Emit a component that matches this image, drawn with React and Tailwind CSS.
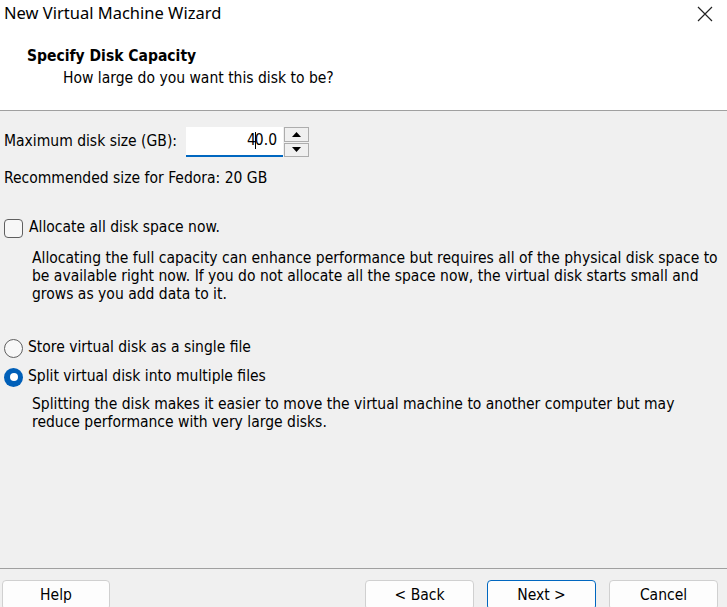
import React from "react";

const body = { fontFamily: '"DejaVu Sans Condensed", "DejaVu Sans", sans-serif', fontStretch: "condensed" };

export default function App() {
  return (
    <div className="w-[727px] h-[607px] overflow-hidden bg-[#f0f0f0] text-[15.5px] text-black flex flex-col" style={body}>
      <div className="h-[111px] bg-white flex flex-col border-b border-[#a0a0a0] shrink-0">
        <div className="h-[27px] flex items-center justify-between pl-[4px] pr-[14px]">
          <span className="text-[16.5px] leading-none" style={{ fontFamily: '"Noto Sans", "Open Sans", sans-serif' }}>New Virtual Machine Wizard</span>
          <svg width="16" height="16" viewBox="0 0 16 16" className="mt-[1px]">
            <path d="M1 1 L15 15 M15 1 L1 15" stroke="#222" strokeWidth="1.2" fill="none" />
          </svg>
        </div>
        <div className="pl-[27px] pt-[19px] font-bold leading-[20px]">Specify Disk Capacity</div>
        <div className="pl-[63px] pt-[2px] leading-[20px]">How large do you want this disk to be?</div>
      </div>

      <div className="flex-1 flex flex-col px-[4px]">
        <div className="flex items-center mt-[16px] h-[30px]">
          <span className="w-[182px] whitespace-nowrap">Maximum disk size (GB):</span>
          <div className="w-[97px] h-[30px] bg-white border-b-2 border-[#0067c0] flex items-center justify-end pr-[6px]">
            <span>4<span className="inline-block w-px h-[17px] bg-black align-middle -mx-px"></span>0.0</span>
          </div>
          <div className="ml-[1px] w-[25px] h-[30px] flex flex-col gap-[1px]">
            <div className="flex-1 bg-[#f0f0f0] border border-[#adadad] flex items-center justify-center">
              <svg width="9" height="5" viewBox="0 0 9 5"><path d="M0 5 L4.5 0 L9 5 Z" fill="#000" /></svg>
            </div>
            <div className="flex-1 bg-[#f0f0f0] border border-[#adadad] flex items-center justify-center">
              <svg width="9" height="5" viewBox="0 0 9 5"><path d="M0 0 L4.5 5 L9 0 Z" fill="#000" /></svg>
            </div>
          </div>
        </div>
        <div className="mt-[11px] leading-[20px]">Recommended size for Fedora: 20 GB</div>

        <label className="flex items-center mt-[30px] h-[20px]">
          <span className="w-[19px] h-[19px] rounded-[4px] border border-[#5f5f5f] bg-[#f7f7f7] shrink-0"></span>
          <span className="ml-[6px]">Allocate all disk space now.</span>
        </label>
        <div className="ml-[28px] mt-[11px] leading-[18px] whitespace-nowrap">
          <div>Allocating the full capacity can enhance performance but requires all of the physical disk space to</div>
          <div>be available right now. If you do not allocate all the space now, the virtual disk starts small and</div>
          <div>grows as you add data to it.</div>
        </div>

        <label className="flex items-center mt-[35px] h-[20px]">
          <span className="w-[19px] h-[19px] rounded-full border border-[#5f5f5f] bg-[#f7f7f7] shrink-0"></span>
          <span className="ml-[5px]">Store virtual disk as a single file</span>
        </label>
        <label className="flex items-center mt-[9px] h-[20px]">
          <span className="w-[19px] h-[19px] rounded-full bg-[#005fb8] shrink-0 flex items-center justify-center">
            <span className="w-[8px] h-[8px] rounded-full bg-white"></span>
          </span>
          <span className="ml-[5px]">Split virtual disk into multiple files</span>
        </label>
        <div className="ml-[28px] mt-[8px] leading-[18px] whitespace-nowrap">
          <div>Splitting the disk makes it easier to move the virtual machine to another computer but may</div>
          <div>reduce performance with very large disks.</div>
        </div>
      </div>

      <div className="border-t border-[#a0a0a0] h-[39px] shrink-0 pt-[11px]">
        <div className="flex w-full h-[28px] pl-[2px] pr-[9px]">
          <button className="w-[108px] h-[30px] pt-[2px] bg-[#fdfdfd] border border-[#d0d0d0] rounded-[4px]">Help</button>
          <div className="flex-1"></div>
          <button className="w-[109px] h-[30px] pt-[2px] bg-[#fdfdfd] border border-[#d0d0d0] rounded-[4px]">&lt; Back</button>
          <button className="ml-[13px] w-[109px] h-[30px] pt-[2px] bg-[#fdfdfd] border border-[#0067c0] rounded-[4px]">Next &gt;</button>
          <button className="ml-[13px] w-[109px] h-[30px] pt-[2px] bg-[#fdfdfd] border border-[#d0d0d0] rounded-[4px]">Cancel</button>
        </div>
      </div>
    </div>
  );
}
